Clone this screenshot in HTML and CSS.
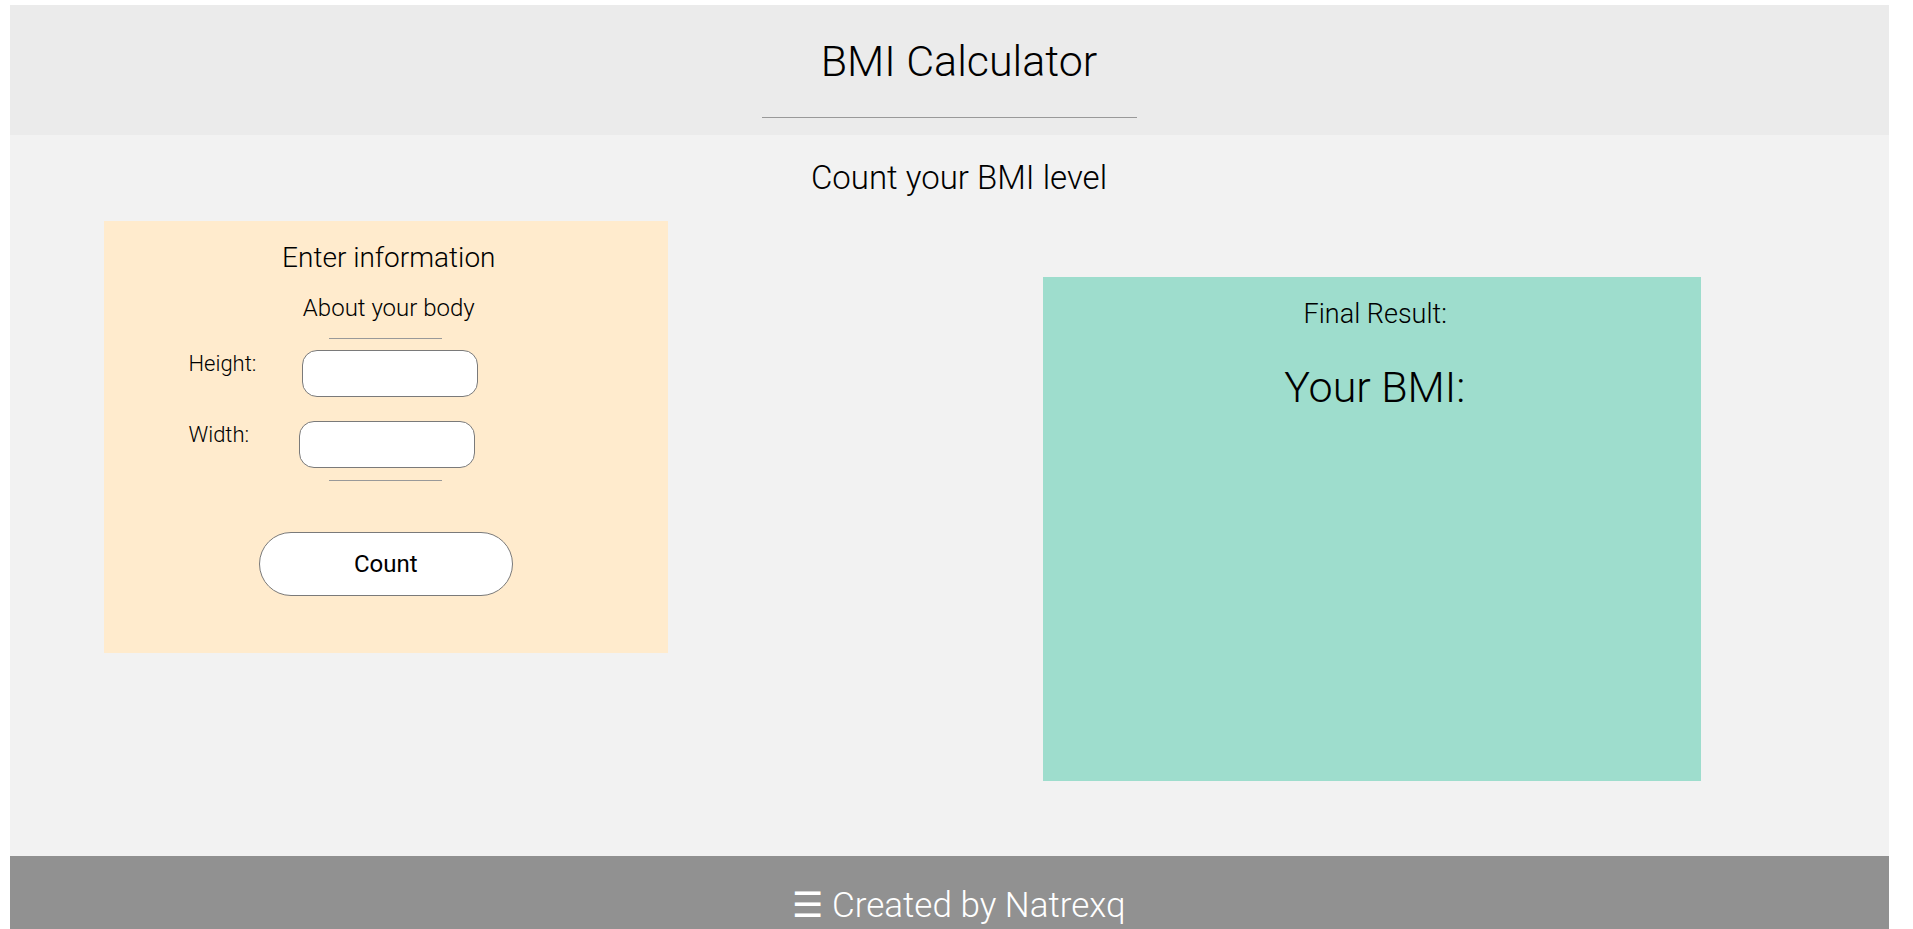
FILE: index.html
```html
<!DOCTYPE html>
<html lang="en">
<head>
<meta charset="utf-8">
<title>BMI Calculator</title>
<link rel="stylesheet" href="styles.css">
</head>
<body>
<header class="site-header">
  <h1 class="site-title">BMI Calculator</h1>
  <hr class="header-rule">
</header>
<main class="main">
  <h2 class="subtitle">Count your BMI level</h2>
  <div class="panels">
    <section class="card card-input">
      <h3 class="card-title">Enter information</h3>
      <p class="card-sub">About your body</p>
      <hr class="card-rule">
      <div class="field-row">
        <label class="field-label" for="height">Height:</label>
        <input class="field-input" id="height" type="text">
      </div>
      <div class="field-row field-row-second">
        <label class="field-label" for="width">Width:</label>
        <input class="field-input" id="width" type="text">
      </div>
      <hr class="card-rule card-rule-bottom">
      <button class="count-btn" type="button">Count</button>
    </section>
    <section class="card card-result">
      <p class="result-label">Final Result:</p>
      <p class="result-value">Your BMI:</p>
    </section>
  </div>
</main>
<footer class="site-footer">
  <p class="footer-text">☰ Created by Natrexq</p>
</footer>
</body>
</html>
```
FILE: styles.css
```css
html {
  background: #ffffff;
}

body {
  margin: 5px 24px 0 10px;
  font-family: Roboto, "Liberation Sans", sans-serif;
  font-weight: 300;
  color: #000;
}

.site-header {
  background: #ebebeb;
  padding: 35px 0 17px;
}

.site-title {
  margin: 0;
  padding-left: 19px;
  font-size: 43px;
  line-height: 43px;
  font-weight: 300;
  text-align: center;
}

.header-rule {
  width: 20%;
  margin: 34px auto 0;
  border: 0;
  border-top: 1px solid #999;
  height: 0;
}

.main {
  background: #f2f2f2;
  padding: 26px 0 75px;
}

.subtitle {
  margin: 0;
  padding-left: 19px;
  font-size: 33px;
  line-height: 33px;
  font-weight: 300;
  text-align: center;
}

.panels {
  display: flex;
  align-items: flex-start;
  margin-top: 27px;
}

.card {
  box-sizing: border-box;
  text-align: center;
}

.card-input {
  width: 30%;
  margin-left: 5%;
  background: #ffebcd;
  padding: 23px 0 57px;
}

.card-result {
  width: 35%;
  margin-left: 20%;
  margin-top: 56px;
  height: 504px;
  background: #9eddcd;
  padding-top: 24px;
}

.card-title {
  margin: 0;
  padding-left: 6px;
  font-size: 28px;
  line-height: 28px;
  font-weight: 300;
}

.card-sub {
  margin: 24px 0 0;
  padding-left: 6px;
  font-size: 24px;
  line-height: 24px;
}

.card-rule {
  width: 20%;
  margin: 18px auto 0;
  border: 0;
  border-top: 1px solid #999;
  height: 0;
}

.card-rule-bottom {
  margin-top: 12px;
}

.field-row {
  display: flex;
  align-items: flex-start;
  padding-left: 15%;
  margin-top: 11px;
  text-align: left;
}

.field-row-second {
  margin-top: 24px;
}

.field-label {
  flex: 0 0 114px;
  padding-top: 3px;
  font-size: 22px;
  line-height: 22px;
}

.field-input {
  box-sizing: border-box;
  width: 176px;
  height: 47px;
  margin: 0;
  padding: 0 12px;
  border: 1px solid #7a7a7a;
  border-radius: 15px;
  background: #fff;
  font-family: Roboto, sans-serif;
  font-size: 18px;
}

.field-row-second .field-input {
  margin-left: -3px;
}

.count-btn {
  display: block;
  box-sizing: border-box;
  width: 45%;
  height: 64px;
  margin: 51px auto 0;
  border: 1px solid #7a7a7a;
  border-radius: 32px;
  background: #fff;
  font-family: Roboto, sans-serif;
  font-weight: 400;
  font-size: 24px;
  line-height: 24px;
  color: #000;
}

.result-label {
  margin: 0;
  padding-left: 6px;
  font-size: 27px;
  line-height: 27px;
}

.result-value {
  margin: 38px 0 0;
  padding-left: 5px;
  font-size: 43px;
  line-height: 43px;
}

.site-footer {
  background: #919191;
  padding: 32px 0 15px;
}

.footer-text {
  margin: 0;
  padding-left: 19px;
  font-size: 35px;
  line-height: 35px;
  color: #fff;
  text-align: center;
}
```
